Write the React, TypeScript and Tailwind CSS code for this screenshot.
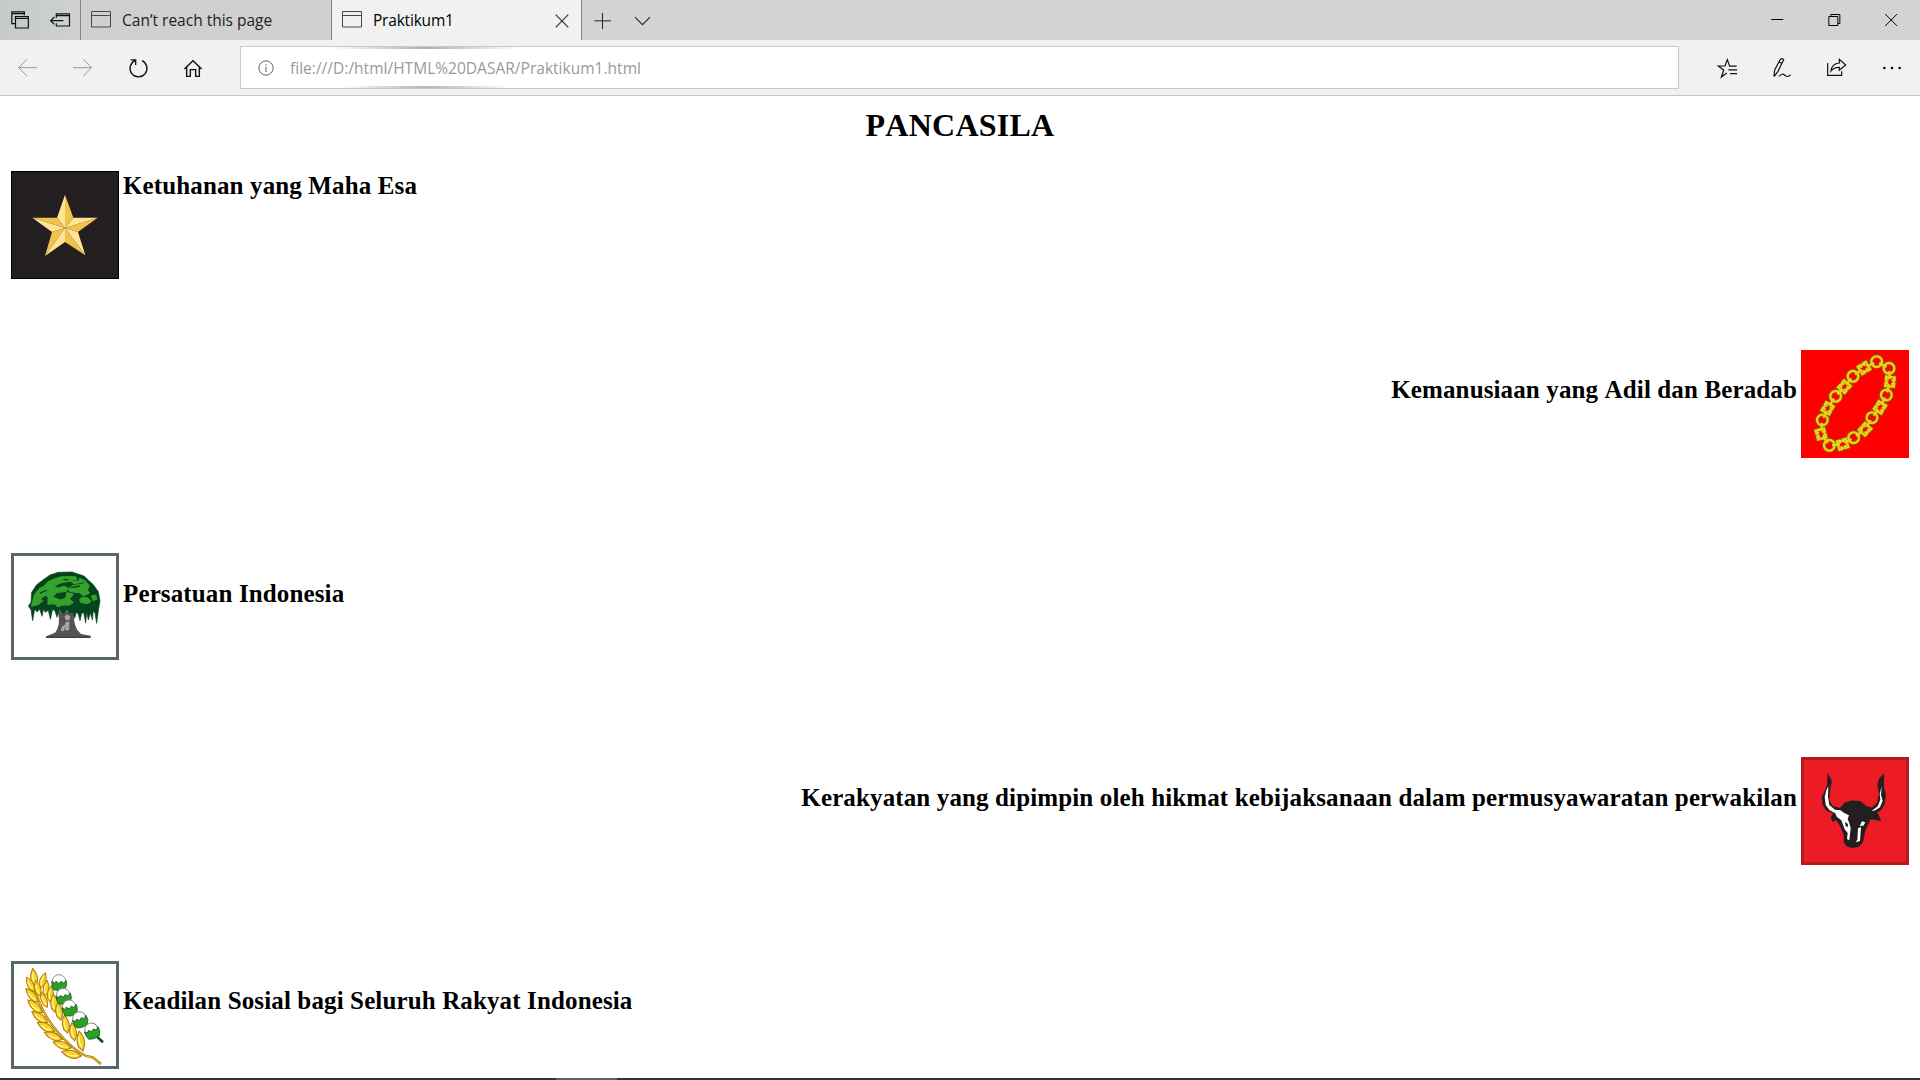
import type { ReactNode } from "react";

type IconProps = { box: string; className: string; children: ReactNode; stroke?: string; weight?: number };

function Icon({ box, className, children, stroke = "#111", weight = 3.6 }: IconProps) {
  return (
    <svg viewBox={box} className={"block shrink-0 " + className} fill="none" stroke={stroke} strokeWidth={weight}>
      {children}
    </svg>
  );
}

function PageIcon() {
  return (
    <svg viewBox="0 0 20 17" className="block h-[17px] w-5 shrink-0" fill="none" stroke="#484848">
      <path d="M.5 .5h19v15.5H.5zM0 4.5h20" />
    </svg>
  );
}

function TabBar() {
  return (
    <div className="flex h-10 bg-[#d3d3d3] font-['Open_Sans',sans-serif] text-[15.5px] leading-[21px] text-[#222]">
      <div className="flex w-[81px] border-r border-[#858585] bg-linear-to-r from-[#c6cacb] to-[#cfd1d1]">
        <Icon box="0 0 120 120" className="size-10">
          <path d="M46 71H35.500V35.500H73V46M35 41H73M46.500 49.500H85V84H46.500zM46 55H85" />
        </Icon>
        <Icon box="120 0 120 120" className="size-10">
          <path d="M169 53V41.500H208.500V78H169V70M169 47H208M152 62H190M163 51L152 62L163 73" />
        </Icon>
      </div>
      <div className="flex w-[251px] items-start border-r border-[#858585] bg-[#d0d0d0] pt-[11px] pl-[10px]">
        <PageIcon />
        <span className="-mt-px ml-[11px] whitespace-nowrap">Can’t reach this page</span>
      </div>
      <div className="flex w-[250px] items-start border-r border-[#858585] bg-[#f1f1f1] pt-[11px] pl-[10px] text-black">
        <PageIcon />
        <span className="-mt-px ml-[11px] whitespace-nowrap tracking-[-0.2px]">Praktikum1</span>
        <Icon box="0 0 14 14" className="mt-[3px] mr-[12px] ml-auto size-[14px]" stroke="#333" weight={1.2}>
          <path d="M.7 .7L13.300 13.300M13.300 .7L.7 13.300" />
        </Icon>
      </div>
      <Icon box="786 0 123 120" className="h-10 w-[41px]" stroke="#222" weight={3}>
        <path d="M823 62.500H873M847.500 39V87" />
      </Icon>
      <Icon box="909 0 120 120" className="size-10" stroke="#222" weight={3.300}>
        <path d="M945 51.500L967.500 74L990 51.500" />
      </Icon>
      <div className="ml-auto flex">
        <Icon box="266 0 171 120" className="h-10 w-[57px]" stroke="#000" weight={3}>
          <path d="M333 58.500H369" />
        </Icon>
        <Icon box="437 0 171 120" className="h-10 w-[57px]" stroke="#000" weight={3}>
          <path d="M505.500 49.500H532.500V76.500H505.500zM511.500 49V43.500H538.500V70.500H533" />
        </Icon>
        <Icon box="608 0 172 120" className="h-10 w-[57px]" stroke="#000" weight={3}>
          <path d="M675 42L711 78M711 42L675 78" />
        </Icon>
      </div>
    </div>
  );
}

function Toolbar() {
  return (
    <div className="flex h-14 border-b border-[#c6c6c6] bg-[#f1f1f1]">
      <div className="flex w-60">
        <Icon box="0 120 165 165" className="size-[55px]" stroke="#999" weight={3}>
          <path d="M111 203H56M81 178L56 203L81 228" />
        </Icon>
        <Icon box="165 120 165 165" className="size-[55px]" stroke="#999" weight={3}>
          <path d="M219 203H275M250 178L275 203L250 228" />
        </Icon>
        <Icon box="330 120 165 165" className="size-[55px]" weight={4}>
          <path d="M405 182A25.500 25.500 0 1 0 426 182M392 179.500H407V195" />
        </Icon>
        <Icon box="495 120 165 165" className="size-[55px]" weight={4.200}>
          <path d="M553 207L579 182L605 207M560 202V229H571V209H587V229H598V202" />
        </Icon>
      </div>
      <div className="relative mt-[6px] flex h-[43px] w-[1439px] items-center overflow-hidden border border-[#c9c9c9] bg-white">
        <div className="absolute top-0 left-[90px] h-[2px] w-[190px] bg-linear-to-r from-transparent via-[#b0b0b0] to-transparent" />
        <div className="absolute bottom-0 left-[100px] h-[2px] w-[170px] bg-linear-to-r from-transparent via-[#b4b4b4] to-transparent" />
        <Icon box="774 178 48 48" className="ml-[17px] size-4" stroke="#606060" weight={3}>
          <circle cx="798" cy="202" r="21.500" />
          <path d="M798 198V214M798 190V194" />
        </Icon>
        <span className="ml-4 whitespace-nowrap pt-px font-['Open_Sans',sans-serif] text-[15.5px] leading-5 tracking-[0.02px] text-[#999]">
          file:///D:/html/HTML%20DASAR/Praktikum1.html
        </span>
      </div>
      <div className="ml-auto flex">
        <Icon box="120 120 165 165" className="size-[55px]">
          <path d="M230 198.500H209L202 179L195 198H175L191 210L184 231L200 219M205 209.500H231M210 221H231" />
        </Icon>
        <Icon box="285 120 165 165" className="size-[55px]">
          <path d="M342 230L344 210L361 178Q366 174 371 179L354 214L342 230M357 186L366 190M357 229Q368 218 375 226T392 224" />
        </Icon>
        <Icon box="450 120 165 165" className="size-[55px]">
          <path d="M503 189V226H545V214M513 213Q515 191 538 189V178L557 195L538 211V202Q522 201 513 213z" />
        </Icon>
        <Icon box="615 120 165 165" className="size-[55px]">
          <g fill="#111" stroke="none">
            <circle cx="673" cy="204" r="4" />
            <circle cx="696" cy="204" r="4" />
            <circle cx="719" cy="204" r="4" />
          </g>
        </Icon>
      </div>
    </div>
  );
}

function Star() {
  const outer = [[195, 104], [293, 173], [256, 286], [135, 288], [97, 173]];
  const inner = [[220, 173], [234, 216], [195, 246], [156, 216], [171, 173]];
  return (
    <svg viewBox="33 33 324 324" className="block size-[108px] shrink-0">
      <path d="M33 33H357V357H33z" fill="#231f20" stroke="#000" strokeWidth="6" />
      {outer.map((o, i) => (
        <g key={i}>
          <path d={`M195 204L${o}L${inner[i]}z`} fill="#f3c24d" />
          <path d={`M195 204L${o}L${inner[(i + 4) % 5]}z`} fill="#fee493" />
        </g>
      ))}
    </svg>
  );
}

const links = [
  [290, 65], [327, 85], [330, 125], [319, 165], [300, 202], [276, 233], [255, 268], [221, 293], [188, 313],
  [148, 316], [123, 282], [127, 240], [143, 205], [167, 169], [193, 140], [219, 109], [252, 84],
];
const squareLinks = [2, 4, 6, 8, 10, 12, 14, 16];

function ChainShapes() {
  return (
    <>
      {links.map(([x, y], i) => {
        const next = links[(i + 1) % links.length];
        const prev = links[(i + links.length - 1) % links.length];
        const angle = (Math.atan2(next[1] - prev[1], next[0] - prev[0]) * 180) / Math.PI;
        const dx = next[0] - x;
        const dy = next[1] - y;
        return (
          <g key={i}>
            {squareLinks.includes(i) ? (
              <path d="M-6 -4V-13H-14V13H-6V4M6 -4V-13H14V13H6V4M-6 -11H6M-6 11H6" transform={`translate(${x} ${y}) rotate(${angle})`} />
            ) : (
              <circle cx={x} cy={y} r="16" />
            )}
            <path d={`M${x + dx * 0.2} ${y + dy * 0.2}L${x + dx * 0.8} ${y + dy * 0.8}`} />
          </g>
        );
      })}
    </>
  );
}

function Chain() {
  return (
    <svg viewBox="63 30 324 324" className="block size-[108px] shrink-0" fill="none">
      <path d="M63 30H387V354H63z" fill="#fe0000" />
      <g stroke="#8f5a00" strokeWidth="12"><ChainShapes /></g>
      <g stroke="#ecd01a" strokeWidth="7"><ChainShapes /></g>
    </svg>
  );
}

function Tree() {
  return (
    <svg viewBox="33 39 324 321" className="block h-[107px] w-[108px] shrink-0">
      <path d="M37.500 43.500H352.500V355.500H37.500z" fill="#fff" stroke="#59676a" strokeWidth="9" />
      <path d="M174 214Q183 260 165 278L138 289V293H272V287L243 282Q218 264 222 214z" fill="#555254" />
      <path d="M138 292H271" stroke="#333" strokeWidth="3" />
      <path d="M195 229q7-8 14 0v9l-11 2zM187 260l9-6-5 18h-8zM197 248l10-3-1 25h-9z" fill="#aaa" stroke="#aaa" strokeWidth="2" />
      <path
        d="M85 198L93 187L95 157L110 134L130 119L150 105L175 97L216 96L252 108L280 134L295 155L300 183L296 206L290 250L285 219L280 213L277 240L271 218L265 240L260 217L257 249L251 218L245 220L240 242L235 223L229 217L224 235L219 216L210 220L201 211L190 220L178 210L171 232L165 213L158 208L151 238L145 211L136 217L131 207L126 229L119 207L111 216L104 207L98 242L93 209z"
        fill="#04451c"
        stroke="#04451c"
        strokeWidth="2"
      />
      <g fill="#36a22d" stroke="#36a22d" strokeWidth="4" strokeLinejoin="round">
        <path d="M98 188L104 164L119 146L133 139L145 125L163 117L184 111L225 110L230 117L207 124L184 128L160 138L174 145L191 139L202 143L199 153L169 158L157 171L182 181L198 174L201 158L219 163L207 177L219 187L207 195L188 194L173 200L166 191L144 192L145 171L137 164L119 178L128 182L115 193L95 198z" />
        <path d="M239 116L253 121L267 137L261 151L268 158L252 167L239 158L212 155L204 148L218 137L258 131L252 125L224 131L215 126L239 123zM246 173L263 174L272 184L262 190L244 188L239 180zM275 168L287 166L290 177L279 181z" />
      </g>
      <path d="M119 160L142 146L151 150L133 159L126 171L112 170z" fill="#36a22d" />
      <path d="M120 160L140 150M190 119H205M213 143L240 138" stroke="#04451c" strokeWidth="4" fill="none" />
    </svg>
  );
}

function Bull() {
  return (
    <svg viewBox="63 36 324 324" className="block size-[108px] shrink-0">
      <path d="M67.500 40.500H382.500V355.500H67.500z" fill="#ed1c24" stroke="#b11b20" strokeWidth="9" />
      <path
        d="M143 86L155 108L150 132L147 164L157 183L180 190L193 174L216 167L241 169L259 184L276 188L293 172L297 144L293 120L298 100L312 87L311 125L317 151L313 178L304 194L291 202L303 227L271 222L264 238L255 258L248 292L238 304L218 309L200 303L192 291L192 270L181 244L169 224L158 230L153 218L160 204L141 198L129 181L126 157L136 135L142 118z"
        fill="#231f20"
        stroke="#231f20"
        strokeWidth="1.500"
      />
      <path
        d="M145 123L144 155L148 180L165 194L181 196L193 204L207 211L203 222L208 235L212 250L208 286L201 282L203 264L194 253L184 226L170 215L166 205L148 195L137 180L134 155L139 136zM305 124L303 150L308 167L300 187L286 196L274 199L293 184L301 164L299 146zM239 242L246 229L256 232L250 242zM234 250L243 246L240 288L227 292L232 284z"
        fill="#fff"
      />
      <path d="M195 231l9 6-1 10-6-4z" fill="#231f20" />
    </svg>
  );
}

const grains = [
  [102, 83, -8, 1], [128, 92, 18, 0.9], [91, 104, -26, 0.9], [138, 115, 8, 0.9], [96, 137, -40, 1], [151, 132, 7, 0.9],
  [105, 170, -47, 1.05], [162, 160, -2, 1], [119, 202, -53, 1.05], [177, 184, -8, 1], [138, 232, -60, 1.05],
  [197, 223, -9, 1], [160, 259, -66, 1.05], [219, 246, -7, 1], [187, 286, -70, 1.05], [242, 274, -9, 1.1], [215, 313, -76, 1.1],
  [113, 116, -15, 0.9], [132, 150, -20, 0.9],
];
const bolls = [[177, 97, 0], [190, 138, -10], [208, 173, -12], [239, 208, -18], [275, 242, -18]];

function RiceAndCotton() {
  return (
    <svg viewBox="33 33 324 324" className="block size-[108px] shrink-0">
      <path d="M37.500 37.500H352.500V352.500H37.500z" fill="#fff" stroke="#59676a" strokeWidth="9" />
      <path d="M103 111Q122 185 170 242T258 318L278 322L303 342" fill="none" stroke="#ac740c" strokeWidth="7" />
      <path d="M103 111Q122 185 170 242T258 318L278 322L302 341" fill="none" stroke="#f4c71b" strokeWidth="3" />
      {grains.map(([x, y, r, s]) => (
        <g key={`${x}-${y}`} transform={`translate(${x} ${y}) rotate(${r}) scale(${s})`}>
          <path d="M0 -28Q14 -8 9 11L2 27L-8 15Q-14 -8 0 -28z" fill="#f9d226" stroke="#ad790b" strokeWidth="3" />
          <path d="M-2 -14Q-7 3 1 16" fill="none" stroke="#fff29b" strokeWidth="4" />
        </g>
      ))}
      <path d="M291 260L309 277" stroke="#075b18" strokeWidth="8" />
      {bolls.map(([x, y, r]) => (
        <g key={x} transform={`translate(${x} ${y}) rotate(${r}) scale(1.1)`}>
          <circle cy="-3" r="18" fill="#fff" stroke="#85868a" strokeWidth="2.500" />
          <path d="M-20 -3L-13 2L-8 -3L-1 3L6 -3L12 2L20 -5L21 8L15 20L0 23L-15 20L-19 10z" fill="#2f9e28" stroke="#075b18" strokeWidth="2" />
        </g>
      ))}
    </svg>
  );
}

type RowProps = { picture: ReactNode; text: string; flip?: boolean; className: string; textClass: string };

function Row({ picture, text, flip, className, textClass }: RowProps) {
  return (
    <section className={"flex shrink-0 items-start gap-1 px-[11px] " + (flip ? "flex-row-reverse " : "") + className}>
      {picture}
      <h3 className={"whitespace-nowrap text-[25px] leading-[30px] font-bold tracking-[0.13px] " + textClass}>{text}</h3>
    </section>
  );
}

export default function App() {
  return (
    <div className="flex h-[1080px] w-[1920px] flex-col overflow-hidden bg-white text-black">
      <TabBar />
      <Toolbar />
      <main className="flex h-[982px] flex-col overflow-hidden font-['Liberation_Serif',serif] [font-kerning:none]">
        <h2 className="mt-[11px] h-16 text-center text-[32px] leading-[36px] font-bold tracking-[0.25px]">PANCASILA</h2>
        <Row className="h-[179px]" textClass="" picture={<Star />} text="Ketuhanan yang Maha Esa" />
        <Row className="h-[203px]" textClass="pt-[25px]" flip picture={<Chain />} text="Kemanusiaan yang Adil dan Beradab" />
        <Row className="h-[204px]" textClass="pt-[26px]" picture={<Tree />} text="Persatuan Indonesia" />
        <Row className="h-[204px]" textClass="pt-[26px]" flip picture={<Bull />} text="Kerakyatan yang dipimpin oleh hikmat kebijaksanaan dalam permusyawaratan perwakilan" />
        <Row className="h-[117px]" textClass="pt-[25px]" picture={<RiceAndCotton />} text="Keadilan Sosial bagi Seluruh Rakyat Indonesia" />
      </main>
      <div className="flex h-[2px] bg-[#333] pl-[556px]">
        <div className="w-[61px] bg-[#606060]" />
      </div>
    </div>
  );
}
